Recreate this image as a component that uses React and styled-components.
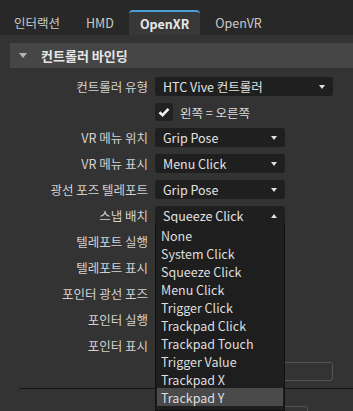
import styled, { createGlobalStyle, css } from 'styled-components';

const GlobalStyle = createGlobalStyle`
	html, body {
		margin: 0;
		padding: 0;
		background: #282828;
	}
	body {
		font-family: 'Noto Sans CJK KR', 'Noto Sans', sans-serif;
		font-size: 12.5px;
		color: #d8d8d8;
	}
`;

const Window = styled.div`
	width: 353px;
	height: 411px;
	overflow: hidden;
	display: flex;
	flex-direction: column;
	background: #282828;
`;

const TabBar = styled.div`
	flex-shrink: 0;
	height: 35px;
	display: flex;
	align-items: flex-end;
	gap: 4px;
	padding-left: 3px;
	box-sizing: border-box;
`;

const Tab = styled.div`
	height: 25px;
	padding: 0 11px;
	display: flex;
	align-items: center;
	box-sizing: border-box;
	color: #c8c8c8;
	font-size: 12.5px;
	border-radius: 4px 4px 0 0;

	${({ $active }) =>
		$active &&
		css`
			background: #383838;
			border-top: 2px solid #4d9fd9;
			padding-bottom: 1px;
			color: #e8e8e8;
			font-weight: 700;
		`}
`;

const Panel = styled.div`
	flex: 1;
	min-height: 0;
	background: #333333;
	padding-top: 8px;
	position: relative;
`;

const SectionHeader = styled.div`
	margin-left: 10px;
	height: 25px;
	background: #464646;
	display: flex;
	align-items: center;
	gap: 14px;
	padding-left: 9px;
	font-size: 13px;
	font-weight: 700;
	color: #e6e6e6;
`;

const Caret = styled.span`
	width: 0;
	height: 0;
	border-left: 4px solid transparent;
	border-right: 4px solid transparent;
	border-top: 5px solid #b4b4b4;
`;

const Form = styled.div`
	display: grid;
	grid-template-columns: 148px 1fr;
	column-gap: 7px;
	row-gap: 7px;
	margin-top: 9px;
	padding-right: 20px;
	align-items: center;
`;

const Label = styled.div`
	text-align: right;
	color: #d2d2d2;
	white-space: nowrap;
`;

const Select = styled.div`
	position: relative;
	width: ${({ $wide }) => ($wide ? '100%' : '130px')};
	height: 19px;
	box-sizing: border-box;
	background: #1f1f1f;
	border-radius: 3px;
	display: flex;
	align-items: center;
	justify-content: space-between;
	padding: 0 8px;
	color: #e2e2e2;

	${({ $open }) =>
		$open &&
		css`
			border-radius: 3px 3px 0 0;
			border-bottom: 2px solid #5ba3d8;
			padding-top: 2px;
		`}
`;

const Arrow = styled.span`
	width: 0;
	height: 0;
	border-left: 3.5px solid transparent;
	border-right: 3.5px solid transparent;
	${({ $up }) =>
		$up ? 'border-bottom: 4px solid #e0e0e0;' : 'border-top: 4px solid #e0e0e0;'}
`;

const CheckRow = styled.label`
	display: flex;
	align-items: center;
	gap: 7px;
	height: 18px;
	color: #dcdcdc;
`;

const Box = styled.span`
	width: 18px;
	height: 18px;
	border-radius: 3px;
	background: #222222;
	display: flex;
	align-items: center;
	justify-content: center;
`;

const TextInput = styled.div`
	height: 19px;
	box-sizing: border-box;
	border: 1px solid #555555;
	border-radius: 3px;
`;

const Separator = styled.div`
	margin: 7px 0 0 19px;
	border-top: 1px solid #151515;
`;

const Button = styled.div`
	margin: 17px 0 0 160px;
	width: 148px;
	height: 22px;
	box-sizing: border-box;
	border: 1px solid #555555;
	border-radius: 3px;
	display: flex;
	justify-content: center;
	padding-top: 3px;
	color: #d8d8d8;
`;

const Popup = styled.ul`
	position: absolute;
	top: 100%;
	left: 0;
	width: 130px;
	margin: 0;
	padding: 3px 0 4px;
	list-style: none;
	box-sizing: border-box;
	background: #1e1e1e;
	border: 1px solid #111111;
	border-top: none;
	z-index: 10;
`;

const Option = styled.li`
	height: 18px;
	margin: 0 1px;
	padding-left: 4px;
	display: flex;
	align-items: center;
	color: #dedede;
	background: ${({ $hover }) => ($hover ? '#4a4a4a' : 'transparent')};
`;

const options = [
	'None',
	'System Click',
	'Squeeze Click',
	'Menu Click',
	'Trigger Click',
	'Trackpad Click',
	'Trackpad Touch',
	'Trigger Value',
	'Trackpad X',
	'Trackpad Y',
];

const rows = [
	['VR 메뉴 위치', 'Grip Pose'],
	['VR 메뉴 표시', 'Menu Click'],
	['광선 포즈 텔레포트', 'Grip Pose'],
];

const hiddenRows = ['텔레포트 실행', '텔레포트 표시', '포인터 광선 포즈', '포인터 실행', '포인터 표시'];

function Dropdown({ value, wide, open, children }) {
	return (
		<Select $wide={wide} $open={open}>
			<span>{value}</span>
			<Arrow $up={open} />
			{children}
		</Select>
	);
}

export default function App() {
	return (
		<>
			<GlobalStyle />
			<Window>
				<TabBar>
					<Tab>인터랙션</Tab>
					<Tab>HMD</Tab>
					<Tab $active>OpenXR</Tab>
					<Tab>OpenVR</Tab>
				</TabBar>
				<Panel>
					<SectionHeader>
						<Caret />
						컨트롤러 바인딩
					</SectionHeader>
					<Form>
						<Label>컨트롤러 유형</Label>
						<Dropdown wide value='HTC Vive 컨트롤러' />

						<span />
						<CheckRow>
							<Box>
								<svg width='12' height='12' viewBox='0 0 12 12'>
									<polyline
										points='1.5,6.2 4.6,9.2 10.5,2.8'
										fill='none'
										stroke='#f2f2f2'
										strokeWidth='2.6'
									/>
								</svg>
							</Box>
							왼쪽 = 오른쪽
						</CheckRow>

						{rows.map(([label, value]) => (
							<>
								<Label key={label}>{label}</Label>
								<Dropdown value={value} />
							</>
						))}

						<Label>스냅 배치</Label>
						<Dropdown open value='Squeeze Click'>
							<Popup>
								{options.map((o) => (
									<Option key={o} $hover={o === 'Trackpad Y'}>
										{o}
									</Option>
								))}
							</Popup>
						</Dropdown>

						{hiddenRows.map((label) => (
							<>
								<Label key={label}>{label}</Label>
								<Dropdown value='None' />
							</>
						))}

						<span />
						<TextInput />
					</Form>
					<Separator />
					<Button>바인딩 추가</Button>
				</Panel>
			</Window>
		</>
	);
}
